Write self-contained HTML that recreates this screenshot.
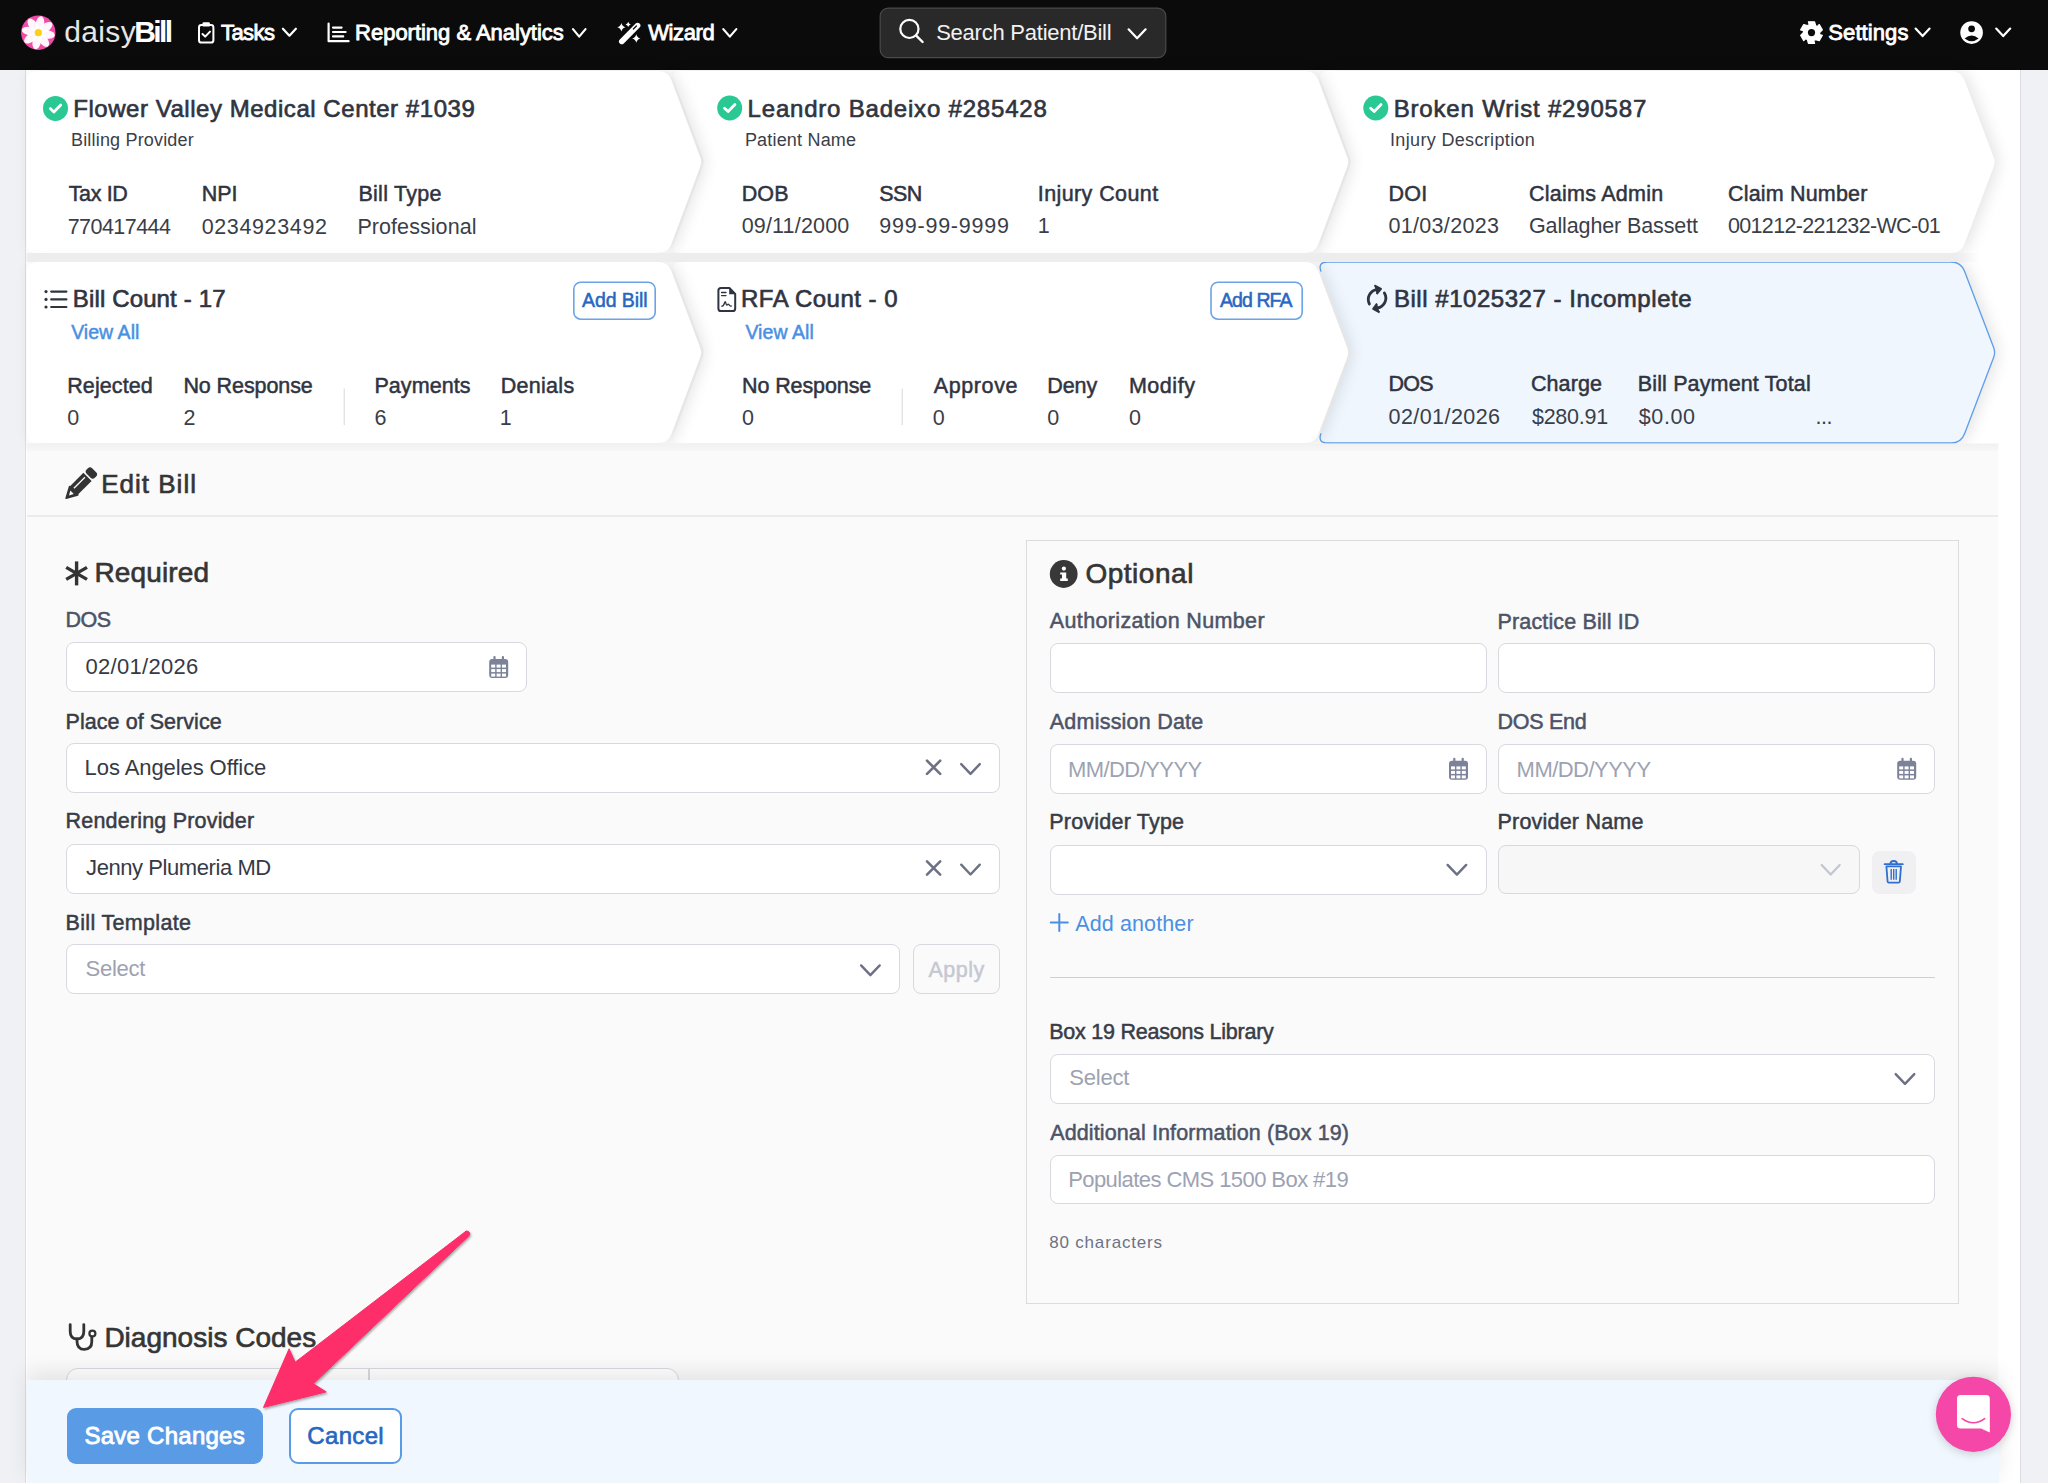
<!DOCTYPE html>
<html><head><meta charset="utf-8">
<style>
html,body{margin:0;padding:0}
body{width:2048px;height:1483px;overflow:hidden;position:relative;background:#f0f1f4;font-family:"Liberation Sans",sans-serif}
.abs{position:absolute}
.tx{position:absolute;white-space:pre;line-height:1;font-family:"Liberation Sans",sans-serif}
.inp{position:absolute;background:#fff;border:1px solid #d8d9df;border-radius:8px;box-sizing:border-box}
</style></head><body>
<!-- container -->
<div class="abs" style="left:25px;top:70px;width:996px;height:1413px;background:#fff;border-left:1.5px solid #dcdde3;box-sizing:border-box;width:1996px;border-right:1.5px solid #dcdde3"></div>
<!-- nav -->
<div class="abs" style="left:0;top:0;width:2048px;height:70px;background:#0b0b0b"></div>
<svg class="abs" style="left:0;top:0" width="2048" height="1483" viewBox="0 0 2048 1483">
<defs><filter id="blr" x="-10%" y="-30%" width="120%" height="160%"><feGaussianBlur stdDeviation="8"/></filter><filter id="blr2" x="-10%" y="-30%" width="120%" height="160%"><feGaussianBlur stdDeviation="4"/></filter></defs>
<linearGradient id="g2" x1="0" y1="0" x2="0" y2="1"><stop offset="0" stop-color="#f1f1f1"/><stop offset="1" stop-color="#f7f7f7"/></linearGradient>
<path d="M1321.00,80.37 Q1317.50,71.00 1327.50,71.00 L1951.00,71.00 Q1961.00,71.00 1964.54,80.35 L1991.96,152.65 Q1995.50,162.00 1991.96,171.35 L1964.54,243.65 Q1961.00,253.00 1951.00,253.00 L1327.50,253.00 Q1317.50,253.00 1321.00,243.63 L1348.00,171.37 Q1351.50,162.00 1348.00,152.63 Z" fill="#000" opacity="0.11" transform="translate(4,0)" filter="url(#blr)"/>
<path d="M1321.00,80.37 Q1317.50,71.00 1327.50,71.00 L1951.00,71.00 Q1961.00,71.00 1964.54,80.35 L1993.73,157.32 Q1995.50,162.00 1993.73,166.68 L1964.54,243.65 Q1961.00,253.00 1951.00,253.00 L1327.50,253.00 Q1317.50,253.00 1321.00,243.63 L1349.75,166.68 Q1351.50,162.00 1349.75,157.32 Z" fill="#fff"/>
<path d="M674.00,80.37 Q670.50,71.00 680.50,71.00 L1305.00,71.00 Q1315.00,71.00 1318.50,80.37 L1345.50,152.63 Q1349.00,162.00 1345.50,171.37 L1318.50,243.63 Q1315.00,253.00 1305.00,253.00 L680.50,253.00 Q670.50,253.00 674.00,243.63 L701.00,171.37 Q704.50,162.00 701.00,152.63 Z" fill="#000" opacity="0.11" transform="translate(4,0)" filter="url(#blr)"/>
<path d="M674.00,80.37 Q670.50,71.00 680.50,71.00 L1305.00,71.00 Q1315.00,71.00 1318.50,80.37 L1347.25,157.32 Q1349.00,162.00 1347.25,166.68 L1318.50,243.63 Q1315.00,253.00 1305.00,253.00 L680.50,253.00 Q670.50,253.00 674.00,243.63 L702.75,166.68 Q704.50,162.00 702.75,157.32 Z" fill="#fff"/>
<path d="M26.50,81.00 Q26.50,71.00 36.50,71.00 L658.00,71.00 Q668.00,71.00 671.50,80.37 L698.50,152.63 Q702.00,162.00 698.50,171.37 L671.50,243.63 Q668.00,253.00 658.00,253.00 L36.50,253.00 Q26.50,253.00 26.50,243.00 Z" fill="#000" opacity="0.11" transform="translate(4,0)" filter="url(#blr)"/>
<path d="M26.50,81.00 Q26.50,71.00 36.50,71.00 L658.00,71.00 Q668.00,71.00 671.50,80.37 L700.25,157.32 Q702.00,162.00 700.25,166.68 L671.50,243.63 Q668.00,253.00 658.00,253.00 L36.50,253.00 Q26.50,253.00 26.50,243.00 Z" fill="#fff"/>
<path d="M1321.02,271.36 Q1317.50,262.00 1327.50,262.00 L1951.00,262.00 Q1961.00,262.00 1964.56,271.34 L1991.94,343.16 Q1995.50,352.50 1991.94,361.84 L1964.56,433.66 Q1961.00,443.00 1951.00,443.00 L1327.50,443.00 Q1317.50,443.00 1321.02,433.64 L1347.98,361.86 Q1351.50,352.50 1347.98,343.14 Z" fill="#000" opacity="0.11" transform="translate(4,0)" filter="url(#blr)"/>
<path d="M1321.02,271.36 Q1317.50,262.00 1327.50,262.00 L1951.00,262.00 Q1961.00,262.00 1964.56,271.34 L1993.72,347.83 Q1995.50,352.50 1993.72,357.17 L1964.56,433.66 Q1961.00,443.00 1951.00,443.00 L1327.50,443.00 Q1317.50,443.00 1321.02,433.64 L1349.74,357.18 Q1351.50,352.50 1349.74,347.82 Z" fill="#eff6fe"/>
<path d="M1321.0,271.6 Q1317.5,262 1327.5,262 L1951,262 Q1961,262 1964.5620999490636,271.3440592866741 L1993.7189500254683,347.82797035666295 Q1995.5,352.5 1993.7189500254683,357.17202964333705 L1964.5620999490636,433.6559407133259 Q1961,443 1951,443 L1327.5,443 Q1317.5,443 1321.0,433.4" fill="none" stroke="#5d9de8" stroke-width="1.3"/>
<path d="M674.02,271.36 Q670.50,262.00 680.50,262.00 L1305.00,262.00 Q1315.00,262.00 1318.52,271.36 L1345.48,343.14 Q1349.00,352.50 1345.48,361.86 L1318.52,433.64 Q1315.00,443.00 1305.00,443.00 L680.50,443.00 Q670.50,443.00 674.02,433.64 L700.98,361.86 Q704.50,352.50 700.98,343.14 Z" fill="#000" opacity="0.11" transform="translate(4,0)" filter="url(#blr)"/>
<path d="M674.02,271.36 Q670.50,262.00 680.50,262.00 L1305.00,262.00 Q1315.00,262.00 1318.52,271.36 L1347.24,347.82 Q1349.00,352.50 1347.24,357.18 L1318.52,433.64 Q1315.00,443.00 1305.00,443.00 L680.50,443.00 Q670.50,443.00 674.02,433.64 L702.74,357.18 Q704.50,352.50 702.74,347.82 Z" fill="#fff"/>
<path d="M26.50,272.00 Q26.50,262.00 36.50,262.00 L658.00,262.00 Q668.00,262.00 671.52,271.36 L698.48,343.14 Q702.00,352.50 698.48,361.86 L671.52,433.64 Q668.00,443.00 658.00,443.00 L36.50,443.00 Q26.50,443.00 26.50,433.00 Z" fill="#000" opacity="0.11" transform="translate(4,0)" filter="url(#blr)"/>
<path d="M26.50,272.00 Q26.50,262.00 36.50,262.00 L658.00,262.00 Q668.00,262.00 671.52,271.36 L700.24,347.82 Q702.00,352.50 700.24,357.18 L671.52,433.64 Q668.00,443.00 658.00,443.00 L36.50,443.00 Q26.50,443.00 26.50,433.00 Z" fill="#fff"/>
<linearGradient id="g1" x1="0" y1="0" x2="1" y2="0"><stop offset="0" stop-color="#ededed"/><stop offset="1" stop-color="#ededed" stop-opacity="0"/></linearGradient>
<rect x="26.5" y="253" width="1925" height="9" fill="#ededed"/><rect x="1951.5" y="253" width="28" height="9" fill="url(#g1)"/>
<rect x="26.5" y="443.5" width="1972" height="7.5" fill="url(#g2)"/>
<rect x="573.8" y="282.2" width="81.4" height="37" rx="7" fill="#fff" stroke="#6aa3e8" stroke-width="1.6"/>
<rect x="1211" y="282.2" width="91.2" height="37" rx="7" fill="#fff" stroke="#6aa3e8" stroke-width="1.6"/>
<rect x="343.6" y="388.5" width="1.4" height="36.5" fill="#e3e3e3"/>
<rect x="901.6" y="388.5" width="1.4" height="36.5" fill="#e3e3e3"/>
</svg>
<div class="abs" style="left:26.5px;top:451px;width:1971.5px;height:1032px;background:#fafafa"></div>
<div class="abs" style="left:26.5px;top:515px;width:1971.5px;height:1.5px;background:#ebebeb"></div>
<div class="abs" style="left:1026px;top:540px;width:933px;height:764px;border:1.5px solid #dcdcdc;box-sizing:border-box"></div>
<div class="inp" style="left:66px;top:642px;width:461px;height:50px"></div>
<div class="inp" style="left:66px;top:743px;width:934px;height:50px"></div>
<div class="inp" style="left:66px;top:844px;width:934px;height:49.5px"></div>
<div class="inp" style="left:66px;top:944px;width:834px;height:49.5px"></div>
<div class="inp" style="left:913px;top:944px;width:87px;height:49.5px;background:transparent"></div>
<div class="inp" style="left:1050px;top:643px;width:437px;height:50px"></div>
<div class="inp" style="left:1498px;top:643px;width:437px;height:50px"></div>
<div class="inp" style="left:1050px;top:744px;width:437px;height:50px"></div>
<div class="inp" style="left:1498px;top:744px;width:437px;height:50px"></div>
<div class="inp" style="left:1050px;top:845px;width:437px;height:49.5px"></div>
<div class="inp" style="left:1498px;top:845px;width:362px;height:49px;background:#f7f7f8"></div>
<div class="abs" style="left:1872px;top:851px;width:43.5px;height:43px;background:#f0f0f3;border-radius:8px"></div>
<div class="abs" style="left:1050px;top:976.5px;width:885px;height:1.5px;background:#cfcfcf"></div>
<div class="inp" style="left:1050px;top:1054px;width:885px;height:50px"></div>
<div class="inp" style="left:1050px;top:1155px;width:885px;height:49px"></div>
<div class="abs" style="left:66px;top:1368px;width:613px;height:40px;border:1.5px solid #d8d9df;border-radius:12px;box-sizing:border-box;background:#fff"></div>
<div class="abs" style="left:368px;top:1368px;width:1.5px;height:20px;background:#d8d9df"></div>
<div class="abs" style="left:26.5px;top:1379.5px;width:1972px;height:104px;background:#f0f7fe;box-shadow:0 -8px 20px rgba(0,0,0,0.09)"></div>
<div class="abs" style="left:66.5px;top:1408px;width:196px;height:56px;background:#5a9be6;border-radius:9px"></div>
<div class="abs" style="left:288.5px;top:1408px;width:113.5px;height:56px;background:#fff;border:2px solid #5a9be6;border-radius:9px;box-sizing:border-box"></div>
<svg class="abs" style="left:0;top:0" width="2048" height="1483" viewBox="0 0 2048 1483">
<circle cx="38.3" cy="32.7" r="17.2" fill="#f24ba7"/>
<ellipse cx="38.3" cy="23.6" rx="4.2" ry="7.6" fill="#fff" opacity="0.95" transform="rotate(10 38.3 32.7)"/>
<ellipse cx="38.3" cy="23.6" rx="4.2" ry="7.6" fill="#fff" opacity="0.95" transform="rotate(55 38.3 32.7)"/>
<ellipse cx="38.3" cy="23.6" rx="4.2" ry="7.6" fill="#fff" opacity="0.95" transform="rotate(100 38.3 32.7)"/>
<ellipse cx="38.3" cy="23.6" rx="4.2" ry="7.6" fill="#fff" opacity="0.95" transform="rotate(145 38.3 32.7)"/>
<ellipse cx="38.3" cy="23.6" rx="4.2" ry="7.6" fill="#fff" opacity="0.95" transform="rotate(190 38.3 32.7)"/>
<ellipse cx="38.3" cy="23.6" rx="4.2" ry="7.6" fill="#fff" opacity="0.95" transform="rotate(235 38.3 32.7)"/>
<ellipse cx="38.3" cy="23.6" rx="4.2" ry="7.6" fill="#fff" opacity="0.95" transform="rotate(280 38.3 32.7)"/>
<ellipse cx="38.3" cy="23.6" rx="4.2" ry="7.6" fill="#fff" opacity="0.95" transform="rotate(325 38.3 32.7)"/>
<circle cx="38.3" cy="32.7" r="3.6" fill="#fcd116"/>
<rect x="199" y="25" width="14.4" height="17.6" rx="2.4" fill="none" stroke="#fff" stroke-width="2"/>
<rect x="202.5" y="22.2" width="7.4" height="4.4" rx="1.2" fill="#fff"/>
<polyline points="202.5,34 205.2,36.6 210,31.6" fill="none" stroke="#fff" stroke-width="2" stroke-linecap="round" stroke-linejoin="round"/>
<polyline points="282.9,28.7 289.4,35.7 295.9,28.7" fill="none" stroke="#ffffff" stroke-width="2.2" stroke-linecap="round" stroke-linejoin="round"/>
<path d="M328.6,23.6 V41.2 H348.6" fill="none" stroke="#fff" stroke-width="2.2" stroke-linecap="round" stroke-linejoin="round"/>
<path d="M333,27.6 H341.6 M333,32 H345.6 M333,36.4 H343.2" stroke="#fff" stroke-width="2.2" stroke-linecap="round"/>
<polyline points="573.0,29.1 579.2,36.6 585.5,29.1" fill="none" stroke="#ffffff" stroke-width="2.2" stroke-linecap="round" stroke-linejoin="round"/>
<path d="M621.8,41.4 L637.6,25.6" stroke="#fff" stroke-width="5.6" stroke-linecap="round"/>
<path d="M633.4,29.0 L636.4,26.0" stroke="#0b0b0b" stroke-width="1.2" stroke-linecap="round"/>
<path d="M621.4,23.1 Q622.156,26.544 625.6,27.3 Q622.156,28.056 621.4,31.5 Q620.644,28.056 617.1999999999999,27.3 Q620.644,26.544 621.4,23.1 Z" fill="#fff"/>
<path d="M628.2,21.799999999999997 Q628.668,23.932 630.8000000000001,24.4 Q628.668,24.868 628.2,27.0 Q627.7320000000001,24.868 625.6,24.4 Q627.7320000000001,23.932 628.2,21.799999999999997 Z" fill="#fff"/>
<path d="M636.3,34.3 Q637.0559999999999,37.744 640.5,38.5 Q637.0559999999999,39.256 636.3,42.7 Q635.544,39.256 632.0999999999999,38.5 Q635.544,37.744 636.3,34.3 Z" fill="#fff"/>
<polyline points="723.3,29.1 729.8,36.6 736.3,29.1" fill="none" stroke="#ffffff" stroke-width="2.2" stroke-linecap="round" stroke-linejoin="round"/>
<rect x="880.2" y="8.1" width="285.6" height="49.6" rx="8" fill="#292929" stroke="#4a4a4a" stroke-width="1.2"/>
<circle cx="909.4" cy="28.9" r="9.1" fill="none" stroke="#fff" stroke-width="2.2"/>
<path d="M916.2,35.6 L922.6,42" stroke="#fff" stroke-width="2.4" stroke-linecap="round"/>
<polyline points="1128.6,29.3 1137.1,38.3 1145.6,29.3" fill="none" stroke="#ffffff" stroke-width="2.2" stroke-linecap="round" stroke-linejoin="round"/>
<polygon points="1808.41,21.83 1814.59,21.83 1815.60,25.50 1817.20,26.70 1819.28,24.54 1822.37,29.89 1819.70,32.60 1819.46,34.58 1822.37,35.31 1819.28,40.66 1815.60,39.70 1813.76,40.48 1814.59,43.37 1808.41,43.37 1807.40,39.70 1805.80,38.50 1803.72,40.66 1800.63,35.31 1803.30,32.60 1803.54,30.62 1800.63,29.89 1803.72,24.54 1807.40,25.50 1809.24,24.72" fill="#fff" stroke="#fff" stroke-width="1.2" stroke-linejoin="round"/>
<circle cx="1811.5" cy="32.6" r="3.6" fill="#0b0b0b"/>
<polyline points="1915.6,28.6 1922.6,36.1 1929.6,28.6" fill="none" stroke="#ffffff" stroke-width="2.2" stroke-linecap="round" stroke-linejoin="round"/>
<circle cx="1971.6" cy="32.6" r="11.3" fill="#fff"/>
<circle cx="1971.6" cy="28.8" r="3.4" fill="#0b0b0b"/>
<path d="M1964.6,38.6 Q1971.6,32.6 1978.6,38.6 Q1971.6,44 1964.6,38.6 Z" fill="#0b0b0b"/>
<polyline points="1996.2,28.6 2003.2,36.1 2010.2,28.6" fill="none" stroke="#ffffff" stroke-width="2.2" stroke-linecap="round" stroke-linejoin="round"/>
<circle cx="55.5" cy="108.4" r="12.5" fill="#2ac994"/><polyline points="50.3,108.60000000000001 53.9,112.0 60.7,105.0" fill="none" stroke="#fff" stroke-width="2.8" stroke-linecap="round" stroke-linejoin="round"/>
<circle cx="729.7" cy="108" r="12.5" fill="#2ac994"/><polyline points="724.5,108.2 728.1,111.6 734.9000000000001,104.6" fill="none" stroke="#fff" stroke-width="2.8" stroke-linecap="round" stroke-linejoin="round"/>
<circle cx="1375.8" cy="108" r="12.5" fill="#2ac994"/><polyline points="1370.6,108.2 1374.2,111.6 1381.0,104.6" fill="none" stroke="#fff" stroke-width="2.8" stroke-linecap="round" stroke-linejoin="round"/>
<circle cx="46" cy="291.6" r="1.6" fill="#2f3440"/>
<path d="M51.2,291.6 H66.4" stroke="#2f3440" stroke-width="2.2" stroke-linecap="round"/>
<circle cx="46" cy="299.4" r="1.6" fill="#2f3440"/>
<path d="M51.2,299.4 H66.4" stroke="#2f3440" stroke-width="2.2" stroke-linecap="round"/>
<circle cx="46" cy="307" r="1.6" fill="#2f3440"/>
<path d="M51.2,307 H66.4" stroke="#2f3440" stroke-width="2.2" stroke-linecap="round"/>
<path d="M729.4,288 H721 Q718.4,288 718.4,290.6 V308.4 Q718.4,311 721,311 H732.6 Q735.2,311 735.2,308.4 V294 Z" fill="none" stroke="#2f3440" stroke-width="2" stroke-linejoin="round"/>
<path d="M729.2,288 V294.2 H735.2 Z" fill="#2f3440"/>
<path d="M721.6,292.5 H726 M721.6,295.6 H726" stroke="#2f3440" stroke-width="1.4" stroke-linecap="round"/>
<path d="M721.8,306.2 Q723.6,306.2 724.6,302.8 Q725.4,300.4 726,303.6 Q726.6,306 727.6,304.6 Q728.4,303.6 729.6,305.4 Q730.4,306.4 731.4,306" fill="none" stroke="#2f3440" stroke-width="1.3" stroke-linecap="round"/>
<path d="M1369.4,304 A10,10 0 0 1 1376.6,289.6" fill="none" stroke="#2f3440" stroke-width="2.8" stroke-linecap="round"/>
<path d="M1374.4,285.4 L1381,288.8 L1376.6,294" fill="#2f3440" stroke="#2f3440" stroke-width="2" stroke-linejoin="round"/>
<path d="M1384.4,293 A10,10 0 0 1 1377.4,308" fill="none" stroke="#2f3440" stroke-width="2.8" stroke-linecap="round"/>
<path d="M1379.6,312.4 L1373.2,308.8 L1377,303.6" fill="#2f3440" stroke="#2f3440" stroke-width="2" stroke-linejoin="round"/>
<g transform="translate(80.0,484.4) rotate(-45)"><rect x="-9" y="-5.8" width="19.6" height="11.6" fill="#333333"/><rect x="12.2" y="-5.8" width="7.8" height="11.6" rx="3" fill="#333333"/><path d="M-9,-5.8 L-19.6,0 L-9,5.8 Z" fill="#333333" stroke="#333333" stroke-width="1.6" stroke-linejoin="round"/><path d="M-7,-1.6 H8.6" stroke="#fafafa" stroke-width="1.3"/><path d="M-15.6,0 L-11.2,2.4 L-11.2,-2.4 Z" fill="#fafafa"/></g>
<g stroke="#333333" stroke-width="3.4" stroke-linecap="butt"><path d="M76.6,561.4 V585.4"/><path d="M66.2,567.4 L87,579.4"/><path d="M66.2,579.4 L87,567.4"/></g>
<circle cx="1063.7" cy="574" r="13.9" fill="#383838"/>
<circle cx="1063.9" cy="568.6" r="2.1" fill="#fff"/>
<path d="M1060.2,572.4 H1066.2 V578.6 H1067.8 V581 H1060.2 V578.6 H1062 V574.6 H1060.2 Z" fill="#fff"/>
<g transform="translate(489.2,656)"><rect x="0" y="3" width="19" height="19" rx="3" fill="#7c8297"/><rect x="4.2" y="0" width="2.2" height="5" rx="1" fill="#7c8297"/><rect x="12.6" y="0" width="2.2" height="5" rx="1" fill="#7c8297"/><rect x="2.0" y="8.6" width="4.0" height="3.0" fill="#fff"/><rect x="7.4" y="8.6" width="4.0" height="3.0" fill="#fff"/><rect x="12.8" y="8.6" width="4.0" height="3.0" fill="#fff"/><rect x="2.0" y="13.1" width="4.0" height="3.0" fill="#fff"/><rect x="7.4" y="13.1" width="4.0" height="3.0" fill="#fff"/><rect x="12.8" y="13.1" width="4.0" height="3.0" fill="#fff"/><rect x="2.0" y="17.6" width="4.0" height="3.0" fill="#fff"/><rect x="7.4" y="17.6" width="4.0" height="3.0" fill="#fff"/><rect x="12.8" y="17.6" width="4.0" height="3.0" fill="#fff"/></g>
<g transform="translate(1449,757.8)"><rect x="0" y="3" width="19" height="19" rx="3" fill="#7c8297"/><rect x="4.2" y="0" width="2.2" height="5" rx="1" fill="#7c8297"/><rect x="12.6" y="0" width="2.2" height="5" rx="1" fill="#7c8297"/><rect x="2.0" y="8.6" width="4.0" height="3.0" fill="#fff"/><rect x="7.4" y="8.6" width="4.0" height="3.0" fill="#fff"/><rect x="12.8" y="8.6" width="4.0" height="3.0" fill="#fff"/><rect x="2.0" y="13.1" width="4.0" height="3.0" fill="#fff"/><rect x="7.4" y="13.1" width="4.0" height="3.0" fill="#fff"/><rect x="12.8" y="13.1" width="4.0" height="3.0" fill="#fff"/><rect x="2.0" y="17.6" width="4.0" height="3.0" fill="#fff"/><rect x="7.4" y="17.6" width="4.0" height="3.0" fill="#fff"/><rect x="12.8" y="17.6" width="4.0" height="3.0" fill="#fff"/></g>
<g transform="translate(1897.2,757.8)"><rect x="0" y="3" width="19" height="19" rx="3" fill="#7c8297"/><rect x="4.2" y="0" width="2.2" height="5" rx="1" fill="#7c8297"/><rect x="12.6" y="0" width="2.2" height="5" rx="1" fill="#7c8297"/><rect x="2.0" y="8.6" width="4.0" height="3.0" fill="#fff"/><rect x="7.4" y="8.6" width="4.0" height="3.0" fill="#fff"/><rect x="12.8" y="8.6" width="4.0" height="3.0" fill="#fff"/><rect x="2.0" y="13.1" width="4.0" height="3.0" fill="#fff"/><rect x="7.4" y="13.1" width="4.0" height="3.0" fill="#fff"/><rect x="12.8" y="13.1" width="4.0" height="3.0" fill="#fff"/><rect x="2.0" y="17.6" width="4.0" height="3.0" fill="#fff"/><rect x="7.4" y="17.6" width="4.0" height="3.0" fill="#fff"/><rect x="12.8" y="17.6" width="4.0" height="3.0" fill="#fff"/></g>
<path d="M927.0,760.6999999999999 L940.2,773.9 M940.2,760.6999999999999 L927.0,773.9" stroke="#6c7185" stroke-width="2.6" stroke-linecap="round"/>
<polyline points="961.2,764.1 970.5,773.9 979.8,764.1" fill="none" stroke="#6c7185" stroke-width="2.4" stroke-linecap="round" stroke-linejoin="round"/>
<path d="M927.0,861.4 L940.2,874.6 M940.2,861.4 L927.0,874.6" stroke="#6c7185" stroke-width="2.6" stroke-linecap="round"/>
<polyline points="961.2,864.7 970.5,874.5 979.8,864.7" fill="none" stroke="#6c7185" stroke-width="2.4" stroke-linecap="round" stroke-linejoin="round"/>
<polyline points="861.1,965.4 870.4,975.2 879.7,965.4" fill="none" stroke="#6c7185" stroke-width="2.4" stroke-linecap="round" stroke-linejoin="round"/>
<polyline points="1447.6,864.9 1456.9,874.7 1466.2,864.9" fill="none" stroke="#6c7185" stroke-width="2.4" stroke-linecap="round" stroke-linejoin="round"/>
<polyline points="1821.7,865.0 1830.7,874.6 1839.7,865.0" fill="none" stroke="#c3c6cf" stroke-width="2.2" stroke-linecap="round" stroke-linejoin="round"/>
<polyline points="1895.7,1074.1 1905.0,1083.9 1914.3,1074.1" fill="none" stroke="#6c7185" stroke-width="2.4" stroke-linecap="round" stroke-linejoin="round"/>
<path d="M1886.4,866.4 H1901 L1899.8,881.6 Q1899.6,882.6 1898.6,882.6 H1888.8 Q1887.8,882.6 1887.6,881.6 Z" fill="none" stroke="#2f6fcf" stroke-width="1.8" stroke-linejoin="round"/>
<path d="M1884.6,864.2 H1902.8 M1890.4,864 Q1890.4,861 1893.7,861 Q1897,861 1897,864" fill="none" stroke="#2f6fcf" stroke-width="1.8" stroke-linecap="round"/>
<path d="M1891.2,869 V879.8 M1893.7,869 V879.8 M1896.2,869 V879.8" stroke="#2f6fcf" stroke-width="1.4"/>
<path d="M1059.3,914 V931 M1050.8,922.5 H1067.8" stroke="#4a90e2" stroke-width="2" stroke-linecap="round"/>
<path d="M70.2,1324.6 V1331.6 Q70.2,1339 77,1339 Q83.8,1339 83.8,1331.6 V1324.6" fill="none" stroke="#333333" stroke-width="2.8" stroke-linecap="round"/>
<path d="M77,1339 V1341.2 Q77,1349.4 84.4,1349.4 Q91.8,1349.4 91.8,1341.6 V1336.6" fill="none" stroke="#333333" stroke-width="2.8" stroke-linecap="round"/>
<circle cx="92.4" cy="1333.6" r="3" fill="none" stroke="#333333" stroke-width="2.2"/>
<circle cx="1973.4" cy="1414.3" r="37.6" fill="#f546a7" filter="url(#sh2)"/>
<path d="M1960,1395 H1986.2 Q1989.8,1395 1989.8,1398.6 V1432.6 L1981,1428.6 H1960.6 Q1957,1428.6 1957,1425 V1398.6 Q1957,1395 1960.6,1395 Z" fill="#fff"/>
<path d="M1962.2,1418.6 Q1973.4,1427 1984.6,1418.6" fill="none" stroke="#f546a7" stroke-width="1.6" stroke-linecap="round"/>
<defs><filter id="sh2" x="-30%" y="-30%" width="160%" height="160%"><feDropShadow dx="0" dy="2" stdDeviation="4" flood-color="#000" flood-opacity="0.18"/></filter><filter id="sh3" x="-20%" y="-20%" width="140%" height="140%"><feDropShadow dx="1" dy="1.5" stdDeviation="1.2" flood-color="#000" flood-opacity="0.35"/></filter></defs>
<path d="M466.2,1231.0 Q468.6,1230.6 469.8,1233.2 Q469.8,1235.2 468.4,1236.4 L313.4,1383.8 L326.2,1391.9 L263.5,1407.4 L289.1,1348.8 L295.2,1362.2 Z" fill="#fe2d6b" filter="url(#sh3)" stroke="#fe2d6b" stroke-width="1" stroke-linejoin="round"/>
</svg>
<div class="tx" style="left:64.2px;top:17.0px;font-size:30px;font-weight:400;color:#e6e6e6;letter-spacing:0.37px;">daisy</div>
<div class="tx" style="left:134.2px;top:17.0px;font-size:30px;font-weight:700;color:#fff;letter-spacing:-2.60px;">Bill</div>
<div class="tx" style="left:221.0px;top:22.0px;font-size:22px;font-weight:400;color:#fff;letter-spacing:-0.58px;-webkit-text-stroke:0.85px currentColor;">Tasks</div>
<div class="tx" style="left:355.1px;top:22.0px;font-size:22px;font-weight:400;color:#fff;letter-spacing:-0.02px;-webkit-text-stroke:0.85px currentColor;">Reporting &amp; Analytics</div>
<div class="tx" style="left:648.2px;top:22.0px;font-size:22px;font-weight:400;color:#fff;letter-spacing:-0.40px;-webkit-text-stroke:0.85px currentColor;">Wizard</div>
<div class="tx" style="left:936.2px;top:22.0px;font-size:22px;font-weight:400;color:#f2f2f2;letter-spacing:-0.24px;">Search Patient/Bill</div>
<div class="tx" style="left:1828.3px;top:22.0px;font-size:22px;font-weight:400;color:#fff;letter-spacing:0.09px;-webkit-text-stroke:0.85px currentColor;">Settings</div>
<div class="tx" style="left:73.2px;top:97.0px;font-size:24px;font-weight:400;color:#30343f;letter-spacing:0.54px;-webkit-text-stroke:0.65px currentColor;">Flower Valley Medical Center #1039</div>
<div class="tx" style="left:71.0px;top:131.0px;font-size:18px;font-weight:400;color:#3a3e48;letter-spacing:0.18px;">Billing Provider</div>
<div class="tx" style="left:68.7px;top:184.0px;font-size:21.5px;font-weight:400;color:#30343f;letter-spacing:-0.36px;-webkit-text-stroke:0.5px currentColor;">Tax ID</div>
<div class="tx" style="left:201.7px;top:184.0px;font-size:21.5px;font-weight:400;color:#30343f;letter-spacing:0.00px;-webkit-text-stroke:0.5px currentColor;">NPI</div>
<div class="tx" style="left:358.4px;top:184.0px;font-size:21.5px;font-weight:400;color:#30343f;letter-spacing:0.29px;-webkit-text-stroke:0.5px currentColor;">Bill Type</div>
<div class="tx" style="left:67.7px;top:217.0px;font-size:21.5px;font-weight:400;color:#3a3e48;letter-spacing:-0.54px;">770417444</div>
<div class="tx" style="left:201.7px;top:217.0px;font-size:21.5px;font-weight:400;color:#3a3e48;letter-spacing:0.63px;">0234923492</div>
<div class="tx" style="left:357.4px;top:217.0px;font-size:21.5px;font-weight:400;color:#3a3e48;letter-spacing:0.07px;">Professional</div>
<div class="tx" style="left:747.6px;top:97.0px;font-size:24px;font-weight:400;color:#30343f;letter-spacing:0.80px;-webkit-text-stroke:0.65px currentColor;">Leandro Badeixo #285428</div>
<div class="tx" style="left:744.9px;top:131.0px;font-size:18px;font-weight:400;color:#3a3e48;letter-spacing:0.19px;">Patient Name</div>
<div class="tx" style="left:741.7px;top:184.0px;font-size:21.5px;font-weight:400;color:#30343f;letter-spacing:0.10px;-webkit-text-stroke:0.5px currentColor;">DOB</div>
<div class="tx" style="left:879.2px;top:184.0px;font-size:21.5px;font-weight:400;color:#30343f;letter-spacing:-0.60px;-webkit-text-stroke:0.5px currentColor;">SSN</div>
<div class="tx" style="left:1037.8px;top:184.0px;font-size:21.5px;font-weight:400;color:#30343f;letter-spacing:0.40px;-webkit-text-stroke:0.5px currentColor;">Injury Count</div>
<div class="tx" style="left:741.7px;top:216.0px;font-size:21.5px;font-weight:400;color:#3a3e48;letter-spacing:0.17px;">09/11/2000</div>
<div class="tx" style="left:879.2px;top:216.0px;font-size:21.5px;font-weight:400;color:#3a3e48;letter-spacing:0.79px;">999-99-9999</div>
<div class="tx" style="left:1037.8px;top:216.0px;font-size:21.5px;font-weight:400;color:#3a3e48;letter-spacing:0.00px;">1</div>
<div class="tx" style="left:1393.7px;top:97.0px;font-size:24px;font-weight:400;color:#30343f;letter-spacing:0.82px;-webkit-text-stroke:0.65px currentColor;">Broken Wrist #290587</div>
<div class="tx" style="left:1390.0px;top:131.0px;font-size:18px;font-weight:400;color:#3a3e48;letter-spacing:0.34px;">Injury Description</div>
<div class="tx" style="left:1388.5px;top:184.0px;font-size:21.5px;font-weight:400;color:#30343f;letter-spacing:0.25px;-webkit-text-stroke:0.5px currentColor;">DOI</div>
<div class="tx" style="left:1529.0px;top:184.0px;font-size:21.5px;font-weight:400;color:#30343f;letter-spacing:0.25px;-webkit-text-stroke:0.5px currentColor;">Claims Admin</div>
<div class="tx" style="left:1728.0px;top:184.0px;font-size:21.5px;font-weight:400;color:#30343f;letter-spacing:0.18px;-webkit-text-stroke:0.5px currentColor;">Claim Number</div>
<div class="tx" style="left:1388.5px;top:216.0px;font-size:21.5px;font-weight:400;color:#3a3e48;letter-spacing:0.31px;">01/03/2023</div>
<div class="tx" style="left:1529.0px;top:216.0px;font-size:21.5px;font-weight:400;color:#3a3e48;letter-spacing:-0.12px;">Gallagher Bassett</div>
<div class="tx" style="left:1728.0px;top:216.0px;font-size:21.5px;font-weight:400;color:#3a3e48;letter-spacing:-0.67px;">001212-221232-WC-01</div>
<div class="tx" style="left:72.8px;top:287.0px;font-size:24px;font-weight:400;color:#30343f;letter-spacing:0.14px;-webkit-text-stroke:0.65px currentColor;">Bill Count - 17</div>
<div class="tx" style="left:71.2px;top:323.0px;font-size:19.5px;font-weight:400;color:#4a90e2;letter-spacing:0.03px;-webkit-text-stroke:0.5px currentColor;">View All</div>
<div class="tx" style="left:582.0px;top:291.0px;font-size:19.5px;font-weight:400;color:#2767c2;letter-spacing:-0.09px;-webkit-text-stroke:0.5px currentColor;">Add Bill</div>
<div class="tx" style="left:67.2px;top:376.0px;font-size:21.5px;font-weight:400;color:#30343f;letter-spacing:0.11px;-webkit-text-stroke:0.5px currentColor;">Rejected</div>
<div class="tx" style="left:183.4px;top:376.0px;font-size:21.5px;font-weight:400;color:#30343f;letter-spacing:-0.09px;-webkit-text-stroke:0.5px currentColor;">No Response</div>
<div class="tx" style="left:374.4px;top:376.0px;font-size:21.5px;font-weight:400;color:#30343f;letter-spacing:0.07px;-webkit-text-stroke:0.5px currentColor;">Payments</div>
<div class="tx" style="left:500.7px;top:376.0px;font-size:21.5px;font-weight:400;color:#30343f;letter-spacing:0.30px;-webkit-text-stroke:0.5px currentColor;">Denials</div>
<div class="tx" style="left:67.2px;top:408.0px;font-size:21.5px;font-weight:400;color:#3a3e48;letter-spacing:0.00px;">0</div>
<div class="tx" style="left:183.4px;top:408.0px;font-size:21.5px;font-weight:400;color:#3a3e48;letter-spacing:0.00px;">2</div>
<div class="tx" style="left:374.4px;top:408.0px;font-size:21.5px;font-weight:400;color:#3a3e48;letter-spacing:0.00px;">6</div>
<div class="tx" style="left:499.7px;top:408.0px;font-size:21.5px;font-weight:400;color:#3a3e48;letter-spacing:0.00px;">1</div>
<div class="tx" style="left:741.0px;top:287.0px;font-size:24px;font-weight:400;color:#30343f;letter-spacing:0.48px;-webkit-text-stroke:0.65px currentColor;">RFA Count - 0</div>
<div class="tx" style="left:745.4px;top:323.0px;font-size:19.5px;font-weight:400;color:#4a90e2;letter-spacing:0.07px;-webkit-text-stroke:0.5px currentColor;">View All</div>
<div class="tx" style="left:1220.0px;top:291.0px;font-size:19.5px;font-weight:400;color:#2767c2;letter-spacing:-0.92px;-webkit-text-stroke:0.5px currentColor;">Add RFA</div>
<div class="tx" style="left:742.0px;top:376.0px;font-size:21.5px;font-weight:400;color:#30343f;letter-spacing:-0.10px;-webkit-text-stroke:0.5px currentColor;">No Response</div>
<div class="tx" style="left:933.7px;top:376.0px;font-size:21.5px;font-weight:400;color:#30343f;letter-spacing:0.62px;-webkit-text-stroke:0.5px currentColor;">Approve</div>
<div class="tx" style="left:1047.2px;top:376.0px;font-size:21.5px;font-weight:400;color:#30343f;letter-spacing:-0.03px;-webkit-text-stroke:0.5px currentColor;">Deny</div>
<div class="tx" style="left:1128.9px;top:376.0px;font-size:21.5px;font-weight:400;color:#30343f;letter-spacing:0.54px;-webkit-text-stroke:0.5px currentColor;">Modify</div>
<div class="tx" style="left:742.0px;top:408.0px;font-size:21.5px;font-weight:400;color:#3a3e48;letter-spacing:0.00px;">0</div>
<div class="tx" style="left:932.7px;top:408.0px;font-size:21.5px;font-weight:400;color:#3a3e48;letter-spacing:0.00px;">0</div>
<div class="tx" style="left:1047.2px;top:408.0px;font-size:21.5px;font-weight:400;color:#3a3e48;letter-spacing:0.00px;">0</div>
<div class="tx" style="left:1128.9px;top:408.0px;font-size:21.5px;font-weight:400;color:#3a3e48;letter-spacing:0.00px;">0</div>
<div class="tx" style="left:1393.9px;top:287.0px;font-size:24px;font-weight:400;color:#30343f;letter-spacing:0.54px;-webkit-text-stroke:0.65px currentColor;">Bill #1025327 - Incomplete</div>
<div class="tx" style="left:1388.6px;top:374.0px;font-size:21.5px;font-weight:400;color:#30343f;letter-spacing:-0.80px;-webkit-text-stroke:0.5px currentColor;">DOS</div>
<div class="tx" style="left:1530.9px;top:374.0px;font-size:21.5px;font-weight:400;color:#30343f;letter-spacing:0.12px;-webkit-text-stroke:0.5px currentColor;">Charge</div>
<div class="tx" style="left:1637.8px;top:374.0px;font-size:21.5px;font-weight:400;color:#30343f;letter-spacing:0.14px;-webkit-text-stroke:0.5px currentColor;">Bill Payment Total</div>
<div class="tx" style="left:1388.6px;top:407.0px;font-size:21.5px;font-weight:400;color:#3a3e48;letter-spacing:0.42px;">02/01/2026</div>
<div class="tx" style="left:1531.9px;top:407.0px;font-size:21.5px;font-weight:400;color:#3a3e48;letter-spacing:-0.22px;">$280.91</div>
<div class="tx" style="left:1638.8px;top:407.0px;font-size:21.5px;font-weight:400;color:#3a3e48;letter-spacing:0.60px;">$0.00</div>
<div class="tx" style="left:1815.5px;top:407.0px;font-size:21.5px;font-weight:400;color:#3a3e48;letter-spacing:-0.50px;">...</div>
<div class="tx" style="left:101.2px;top:471.0px;font-size:26px;font-weight:400;color:#353535;letter-spacing:1.01px;-webkit-text-stroke:0.65px currentColor;">Edit Bill</div>
<div class="tx" style="left:94.4px;top:559.0px;font-size:28px;font-weight:400;color:#353535;letter-spacing:0.16px;-webkit-text-stroke:0.65px currentColor;">Required</div>
<div class="tx" style="left:65.6px;top:610.0px;font-size:21.5px;font-weight:400;color:#4d5367;letter-spacing:-0.55px;-webkit-text-stroke:0.5px currentColor;">DOS</div>
<div class="tx" style="left:85.6px;top:656.0px;font-size:22px;font-weight:400;color:#363a45;letter-spacing:0.27px;">02/01/2026</div>
<div class="tx" style="left:65.6px;top:712.0px;font-size:21.5px;font-weight:400;color:#383c47;letter-spacing:0.05px;-webkit-text-stroke:0.5px currentColor;">Place of Service</div>
<div class="tx" style="left:84.6px;top:757.0px;font-size:22px;font-weight:400;color:#363a45;letter-spacing:-0.08px;">Los Angeles Office</div>
<div class="tx" style="left:65.6px;top:811.0px;font-size:21.5px;font-weight:400;color:#383c47;letter-spacing:0.19px;-webkit-text-stroke:0.5px currentColor;">Rendering Provider</div>
<div class="tx" style="left:86.1px;top:857.0px;font-size:22px;font-weight:400;color:#363a45;letter-spacing:-0.43px;">Jenny Plumeria MD</div>
<div class="tx" style="left:65.6px;top:913.0px;font-size:21.5px;font-weight:400;color:#383c47;letter-spacing:0.32px;-webkit-text-stroke:0.5px currentColor;">Bill Template</div>
<div class="tx" style="left:85.6px;top:958.0px;font-size:22px;font-weight:400;color:#9da2b2;letter-spacing:-0.28px;">Select</div>
<div class="tx" style="left:928.4px;top:960.0px;font-size:21.5px;font-weight:400;color:#c5c8d2;letter-spacing:0.53px;-webkit-text-stroke:0.5px currentColor;">Apply</div>
<div class="tx" style="left:1085.4px;top:560.0px;font-size:28px;font-weight:400;color:#353535;letter-spacing:0.53px;-webkit-text-stroke:0.65px currentColor;">Optional</div>
<div class="tx" style="left:1049.8px;top:611.0px;font-size:21.5px;font-weight:400;color:#4d5367;letter-spacing:0.36px;-webkit-text-stroke:0.5px currentColor;">Authorization Number</div>
<div class="tx" style="left:1497.5px;top:612.0px;font-size:21.5px;font-weight:400;color:#4d5367;letter-spacing:0.14px;-webkit-text-stroke:0.5px currentColor;">Practice Bill ID</div>
<div class="tx" style="left:1049.8px;top:712.0px;font-size:21.5px;font-weight:400;color:#4d5367;letter-spacing:0.22px;-webkit-text-stroke:0.5px currentColor;">Admission Date</div>
<div class="tx" style="left:1497.5px;top:712.0px;font-size:21.5px;font-weight:400;color:#4d5367;letter-spacing:-0.27px;-webkit-text-stroke:0.5px currentColor;">DOS End</div>
<div class="tx" style="left:1068.0px;top:759.0px;font-size:22px;font-weight:400;color:#9da2b2;letter-spacing:-0.57px;">MM/DD/YYYY</div>
<div class="tx" style="left:1516.6px;top:759.0px;font-size:22px;font-weight:400;color:#9da2b2;letter-spacing:-0.54px;">MM/DD/YYYY</div>
<div class="tx" style="left:1049.2px;top:812.0px;font-size:21.5px;font-weight:400;color:#383c47;letter-spacing:0.22px;-webkit-text-stroke:0.5px currentColor;">Provider Type</div>
<div class="tx" style="left:1497.5px;top:812.0px;font-size:21.5px;font-weight:400;color:#383c47;letter-spacing:0.21px;-webkit-text-stroke:0.5px currentColor;">Provider Name</div>
<div class="tx" style="left:1075.2px;top:914.0px;font-size:21.5px;font-weight:400;color:#4a90e2;letter-spacing:0.12px;">Add another</div>
<div class="tx" style="left:1049.2px;top:1022.0px;font-size:21.5px;font-weight:400;color:#383c47;letter-spacing:-0.23px;-webkit-text-stroke:0.5px currentColor;">Box 19 Reasons Library</div>
<div class="tx" style="left:1069.2px;top:1067.0px;font-size:22px;font-weight:400;color:#9da2b2;letter-spacing:-0.20px;">Select</div>
<div class="tx" style="left:1050.2px;top:1123.0px;font-size:21.5px;font-weight:400;color:#4d5367;letter-spacing:0.12px;-webkit-text-stroke:0.5px currentColor;">Additional Information (Box 19)</div>
<div class="tx" style="left:1068.2px;top:1169.0px;font-size:22px;font-weight:400;color:#9da2b2;letter-spacing:-0.57px;">Populates CMS 1500 Box #19</div>
<div class="tx" style="left:1049.2px;top:1234.0px;font-size:17px;font-weight:400;color:#6c7285;letter-spacing:0.82px;">80 characters</div>
<div class="tx" style="left:104.4px;top:1324.0px;font-size:28px;font-weight:400;color:#353535;letter-spacing:0.01px;-webkit-text-stroke:0.65px currentColor;">Diagnosis Codes</div>
<div class="tx" style="left:84.5px;top:1424.0px;font-size:24px;font-weight:400;color:#fff;letter-spacing:0.25px;-webkit-text-stroke:0.85px currentColor;">Save Changes</div>
<div class="tx" style="left:307.3px;top:1424.0px;font-size:24px;font-weight:400;color:#2767c2;letter-spacing:0.34px;-webkit-text-stroke:0.65px currentColor;">Cancel</div>
</body></html>
